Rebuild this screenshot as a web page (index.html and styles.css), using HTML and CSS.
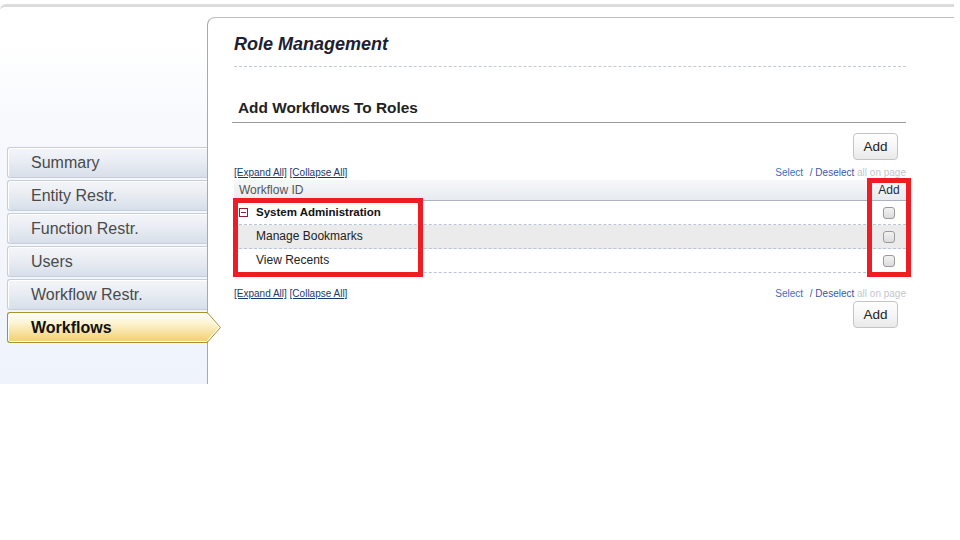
FILE: index.html
```html
<!DOCTYPE html>
<html>
<head>
<meta charset="utf-8">
<link rel="stylesheet" href="styles.css">
</head>
<body>
<div class="frame">
  <nav class="sidebar">
    <ul class="tabs">
      <li class="tab">Summary</li>
      <li class="tab">Entity Restr.</li>
      <li class="tab">Function Restr.</li>
      <li class="tab">Users</li>
      <li class="tab">Workflow Restr.</li>
      <li class="tab tab-active">Workflows
        <svg class="tab-arrow" width="16" height="31" viewBox="0 0 16 31">
          <defs>
            <linearGradient id="gold" x1="0" y1="0" x2="0" y2="1">
              <stop offset="0" stop-color="#fffef6"/>
              <stop offset="0.35" stop-color="#fdf4d2"/>
              <stop offset="1" stop-color="#f0cf6c"/>
            </linearGradient>
          </defs>
          <polygon points="0,1 1,1 14,15.5 1,30 0,30" fill="url(#gold)"/>
          <polyline points="0,1.5 0.6,1.5 13,15.5 0.6,29.5 0,29.5" fill="none" stroke="#ffffff" stroke-width="1"/>
          <polyline points="0,0.5 1.2,0.5 14.5,15.5 1.2,30.5 0,30.5" fill="none" stroke="#a8922e" stroke-width="1"/>
        </svg>
      </li>
    </ul>
  </nav>
  <main class="panel">
    <h1 class="title">Role Management</h1>
    <h2 class="section-title">Add Workflows To Roles</h2>
    <div class="btn-row"><button class="btn">Add</button></div>
    <div class="links-row">
      <div class="tree-links"><a class="tl">[Expand All]</a> <a class="tl">[Collapse All]</a></div>
      <div class="sel-links"><span class="sel">Select</span> <span class="desel">/ Deselect</span> <span class="allpage">all on page</span></div>
    </div>
    <div class="grid">
      <div class="grid-head">
        <div class="cell-name">Workflow ID</div>
        <div class="cell-check head-add">Add</div>
      </div>
      <div class="grid-row">
        <div class="cell-name group"><span class="minus"></span>System Administration</div>
        <div class="cell-check"><input class="cb" type="checkbox"></div>
      </div>
      <div class="grid-row alt">
        <div class="cell-name child">Manage Bookmarks</div>
        <div class="cell-check"><input class="cb" type="checkbox"></div>
      </div>
      <div class="grid-row">
        <div class="cell-name child">View Recents</div>
        <div class="cell-check"><input class="cb" type="checkbox"></div>
      </div>
      <div class="mark mark-names"></div>
      <div class="mark mark-checks"></div>
    </div>
    <div class="links-row links-bottom">
      <div class="tree-links"><a class="tl">[Expand All]</a> <a class="tl">[Collapse All]</a></div>
      <div class="sel-links"><span class="sel">Select</span> <span class="desel">/ Deselect</span> <span class="allpage">all on page</span></div>
    </div>
    <div class="btn-row btn-bottom"><button class="btn">Add</button></div>
  </main>
</div>
</body>
</html>
```
FILE: styles.css
```css
html, body {
  margin: 0;
  padding: 0;
  background: #ffffff;
  font-family: "Liberation Sans", Arial, sans-serif;
}

.frame {
  margin-top: 4px;
  width: 954px;
  height: 380px;
  box-sizing: border-box;
  border-top: 3px solid #dcdcdc;
  border-top-left-radius: 6px;
  display: flex;
  background: #ffffff;
}

.sidebar {
  width: 207px;
  flex-shrink: 0;
  background: linear-gradient(to bottom, #ffffff 0, #ffffff 10%, #f7f9fd 30%, #eff3fb 100%);
  border-top-left-radius: 6px;
}

.tabs {
  list-style: none;
  margin: 0;
  padding: 140px 0 0 7px;
}

.tab {
  position: relative;
  box-sizing: border-box;
  width: 200px;
  height: 31px;
  margin-bottom: 2px;
  padding-left: 23px;
  line-height: 29px;
  font-size: 16px;
  color: #4a4a4a;
  border: 1px solid #c6ceda;
  border-right: 0;
  border-radius: 3px 0 0 3px;
  background: linear-gradient(to bottom, #f3f5f9 0%, #e9edf3 45%, #d8dfea 100%);
  box-shadow: inset 0 1px 0 #ffffff, inset 1px 0 0 #ffffff;
}

.tab-active {
  z-index: 2;
  font-weight: bold;
  color: #111111;
  border-color: #a8922e;
  background: linear-gradient(to bottom, #fffef6 0%, #fdf4d2 35%, #f0cf6c 100%);
  box-shadow: inset 0 1px 0 #ffffff, inset 1px 0 0 #ffffff, inset 0 -1px 0 #ffffff;
}

.tab-arrow {
  position: absolute;
  left: calc(100% - 1px);
  top: -1px;
  display: block;
}

.panel {
  flex: 1;
  margin-top: 10px;
  border-left: 1px solid #a9a9a9;
  border-top: 1px solid #bdbdbd;
  border-top-left-radius: 8px;
  padding: 16px 48px 0 26px;
  background: #ffffff;
}

.title {
  margin: 0;
  font-size: 18px;
  line-height: 20px;
  font-weight: bold;
  font-style: italic;
  color: #1c2033;
  padding-bottom: 12px;
  border-bottom: 1px dashed #c2cad3;
}

.section-title {
  margin: 32px 0 0 -2px;
  padding: 0 0 5px 6px;
  font-size: 15.4px;
  line-height: 18px;
  font-weight: bold;
  color: #222222;
  border-bottom: 1px solid #9c9c9c;
}

.btn-row {
  display: flex;
  justify-content: flex-end;
  padding-right: 8px;
  margin-top: 10px;
}

.btn-bottom {
  margin-top: 1px;
}

.btn {
  box-sizing: border-box;
  width: 45px;
  height: 27px;
  padding: 0;
  font-family: "Liberation Sans", Arial, sans-serif;
  font-size: 13.5px;
  color: #222222;
  border: 1px solid #c4c4c4;
  border-radius: 4px;
  background: linear-gradient(to bottom, #ffffff 0%, #f6f6f6 50%, #e9e9e9 100%);
}

.links-row {
  display: flex;
  justify-content: space-between;
  margin-top: 6px;
  font-size: 10px;
  line-height: 13px;
}

.links-bottom {
  margin-top: 14px;
}

.tl {
  color: #173a6e;
  text-decoration: underline;
}

.sel {
  color: #3a6fc6;
  margin-right: 4px;
}

.desel {
  color: #3a56ad;
}

.allpage {
  color: #c3c6cd;
}

.grid {
  position: relative;
  margin-top: 1px;
}

.grid-head {
  display: flex;
  height: 21px;
  box-sizing: border-box;
  border-bottom: 1px solid #aab3c1;
  background: linear-gradient(to bottom, #f7f8fa 0%, #e7ebef 100%);
  font-size: 12px;
  line-height: 20px;
  color: #555555;
}

.grid-head .cell-name {
  padding-left: 5px;
}

.head-add {
  color: #1c2a46;
}

.grid-row {
  display: flex;
  height: 24px;
  box-sizing: border-box;
  border-bottom: 1px dashed #b6c6da;
  font-size: 12px;
  line-height: 23px;
  color: #222222;
}

.grid-row.alt {
  background: #ebebeb;
}

.cell-name {
  flex: 1;
}

.group {
  display: flex;
  align-items: center;
  padding-left: 5px;
  font-weight: bold;
  font-size: 11.5px;
  color: #111111;
}

.child {
  padding-left: 22px;
}

.minus {
  position: relative;
  box-sizing: border-box;
  width: 9px;
  height: 9px;
  margin-right: 8px;
  border: 1px solid #8e1f2c;
  background: #ffffff;
}

.minus::after {
  content: "";
  position: absolute;
  left: 1px;
  right: 1px;
  top: 3px;
  height: 1px;
  background: #8e1f2c;
}

.cell-check {
  width: 34px;
  display: flex;
  align-items: center;
  justify-content: center;
}

.cb {
  -webkit-appearance: none;
  appearance: none;
  margin: 1px 0 0 0;
  width: 12px;
  height: 12px;
  box-sizing: border-box;
  border: 1px solid #9a9a9a;
  border-radius: 3px;
  background: linear-gradient(to bottom, #f2f2f2 0%, #dcdcdc 100%);
}

.mark {
  position: absolute;
  box-sizing: border-box;
  border: 5px solid #ee1c25;
}

.mark-names {
  left: -1px;
  top: 18px;
  width: 190px;
  height: 79px;
}

.mark-checks {
  left: 633px;
  top: -2px;
  width: 44px;
  height: 99px;
}
```
